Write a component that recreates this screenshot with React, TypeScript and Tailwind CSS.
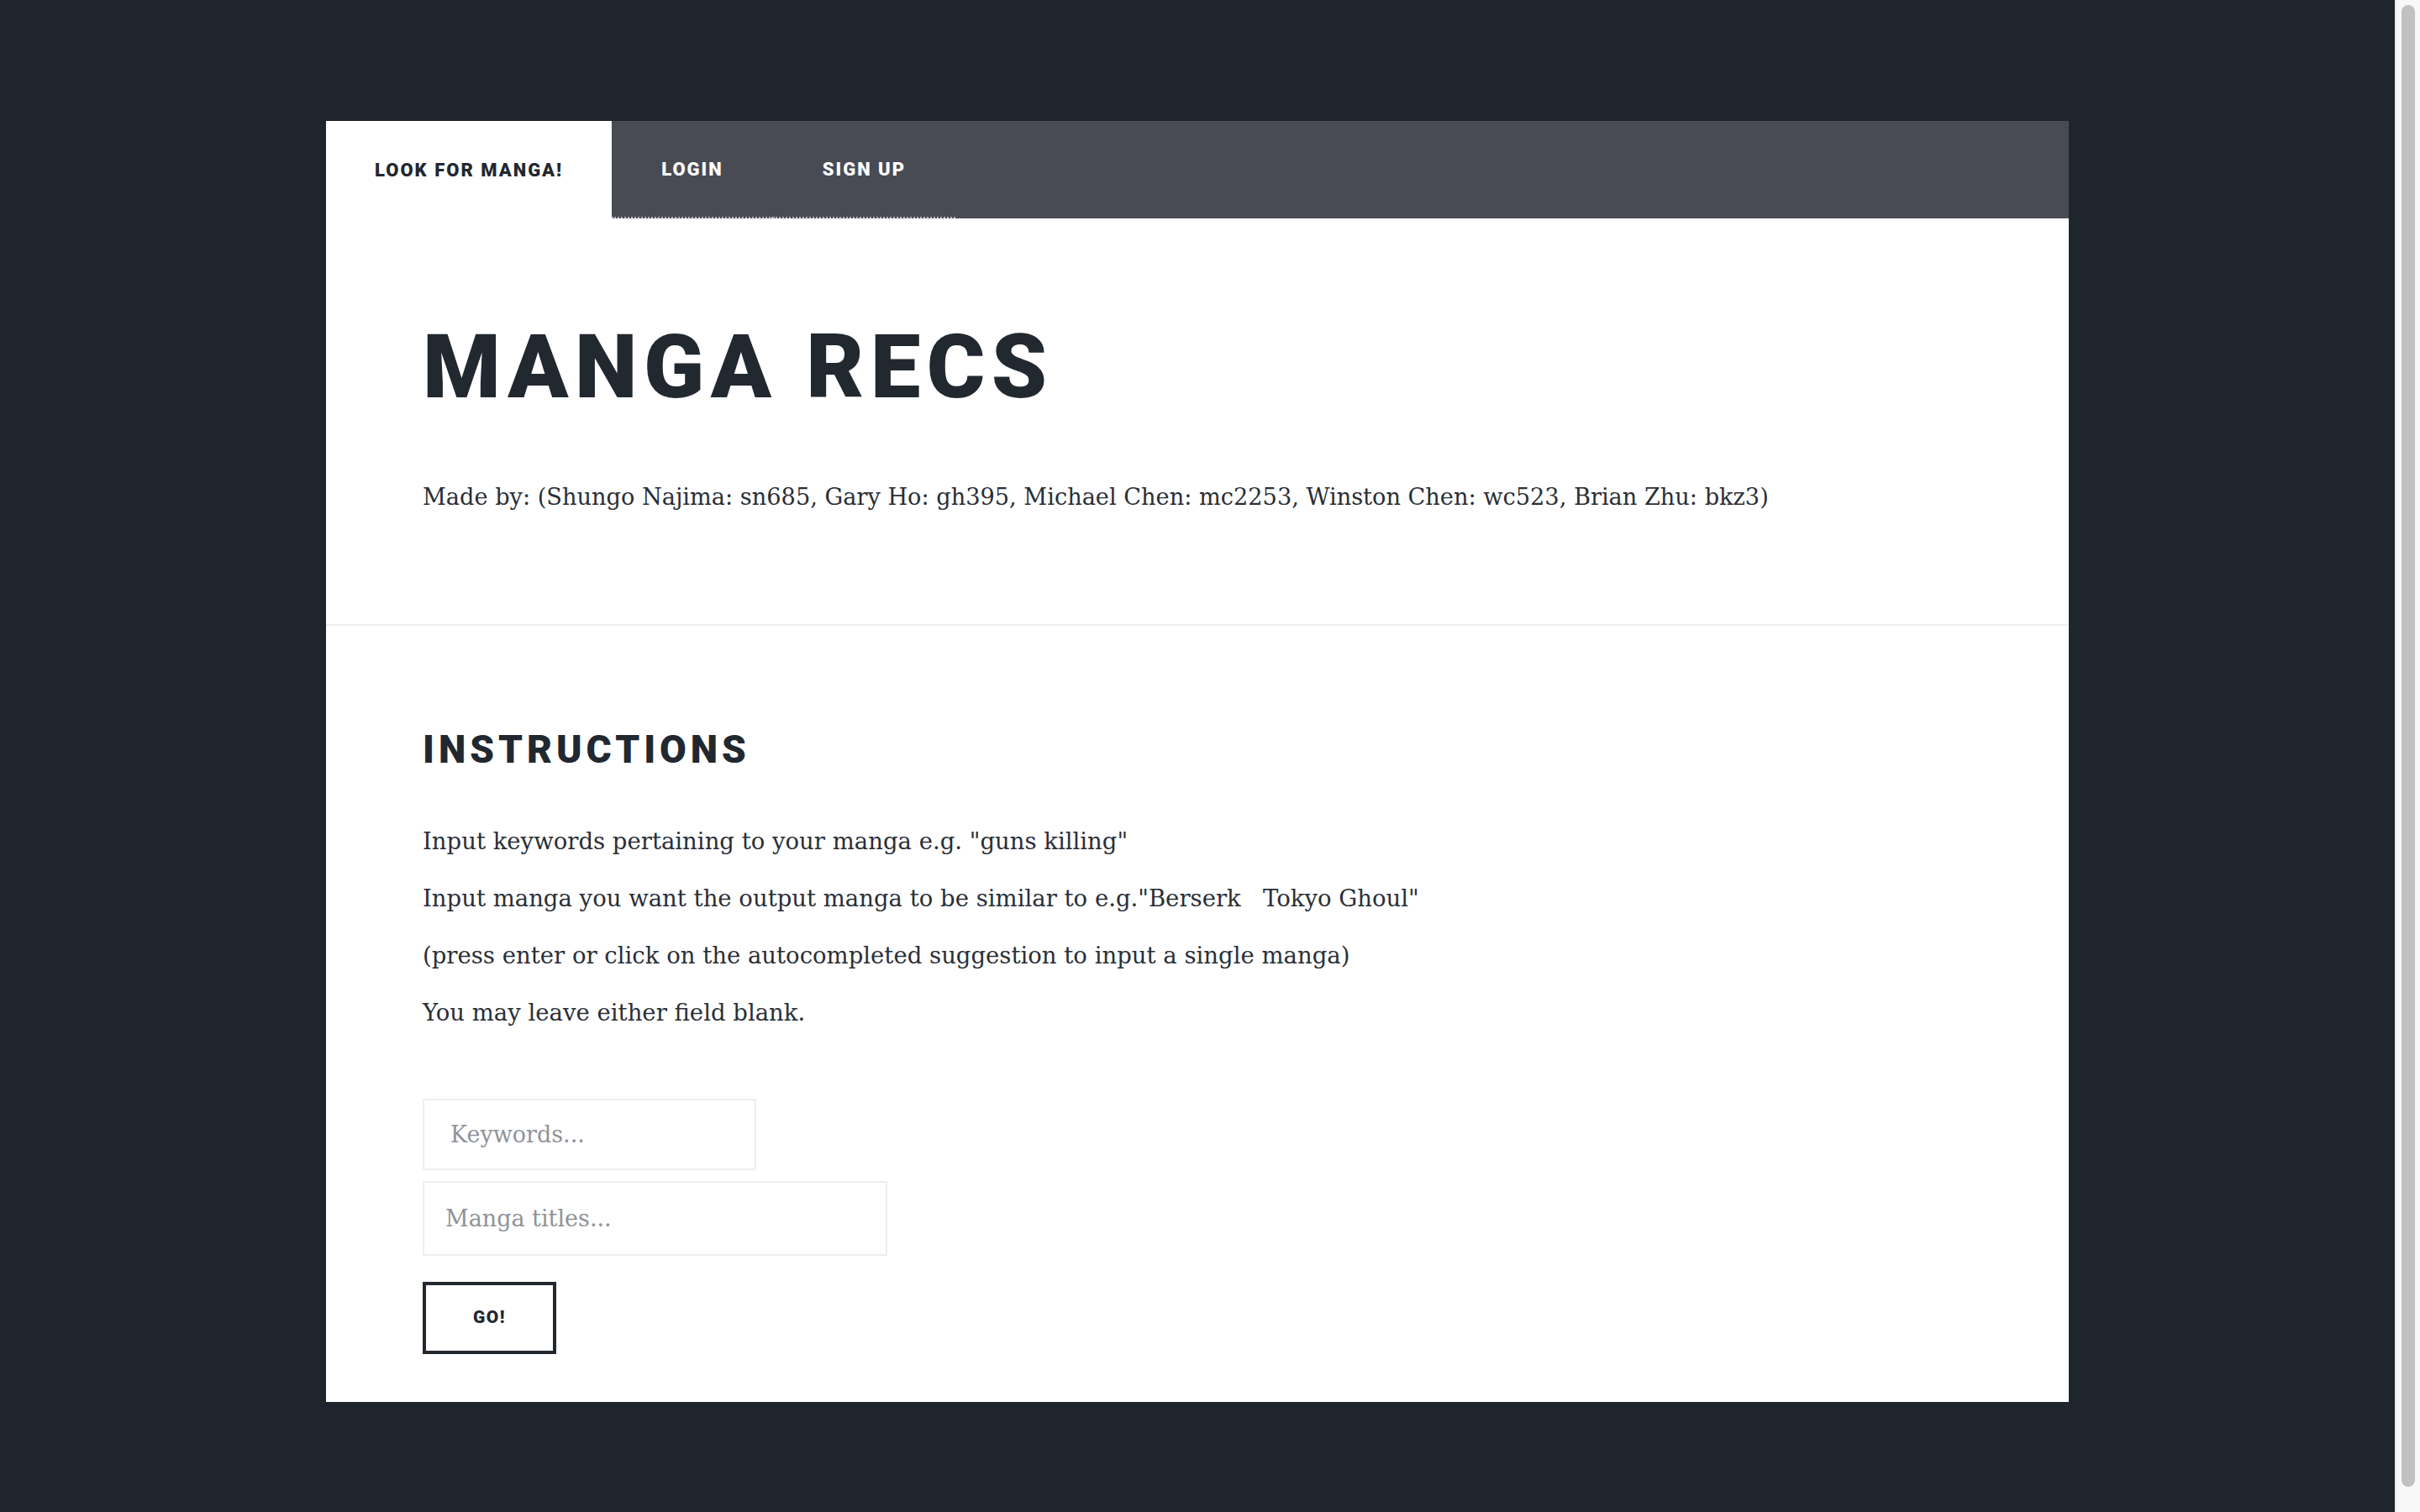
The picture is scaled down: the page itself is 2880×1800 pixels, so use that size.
import React from 'react';

const heading = "font-['Roboto',sans-serif] font-black uppercase text-[#22282f]";
const serif = "font-['DejaVu_Serif',serif] text-[#2a2f37]";

function Tab({ label, active }: { label: string; active?: boolean }) {
    if (active) {
        return (
            <a className={`flex items-center px-[58px] bg-white ${heading} text-[22px] tracking-[2px]`}>
                {label}
            </a>
        );
    }
    return (
        <a className="flex items-center px-[59px] border-b-2 border-dotted border-[#b0b1b5] font-['Roboto',sans-serif] font-black uppercase text-white text-[22px] tracking-[2px]">
            {label}
        </a>
    );
}

export default function App() {
    return (
        <div className="h-screen flex bg-[#1f252d] overflow-hidden">

            <main className="flex-1 pt-[144px] pb-[154px]">
                <div className="w-[2074px] mx-auto bg-white">

                    {/* nav */}
                    <nav className="h-[116px] bg-[#484b53] flex">
                        <Tab label="Look for manga!" active />
                        <Tab label="Login" />
                        <Tab label="Sign up" />
                    </nav>

                    {/* header */}
                    <header className="px-[115px] pt-[124px] pb-[129px] border-b-2 border-[#eeeeee]">
                        <h1 className={`${heading} text-[106px] leading-none tracking-[7.5px]`}>Manga Recs</h1>
                        <p className={`${serif} mt-[80px] text-[27.2px] leading-[44px]`}>
                            Made by: (Shungo Najima: sn685, Gary Ho: gh395, Michael Chen: mc2253, Winston Chen: wc523, Brian Zhu: bkz3)
                        </p>
                    </header>

                    {/* instructions + form */}
                    <section className="px-[115px] pt-[124px] pb-[57px]">
                        <h2 className={`${heading} text-[46px] leading-none tracking-[5px]`}>Instructions</h2>
                        <div className={`${serif} mt-[52px] text-[27.5px] leading-[68px]`}>
                            <p>Input keywords pertaining to your manga e.g. "guns killing"</p>
                            <p>Input manga you want the output manga to be similar to e.g."Berserk&nbsp;&nbsp;&nbsp;Tokyo Ghoul"</p>
                            <p>(press enter or click on the autocompleted suggestion to input a single manga)</p>
                            <p>You may leave either field blank.</p>
                        </div>

                        <div className="mt-[69px] flex flex-col items-start">
                            <input
                                type="text"
                                placeholder="Keywords..."
                                className="w-[397px] h-[85px] border-2 border-[#eeeeee] pl-[31px] font-['DejaVu_Serif',serif] text-[27px] text-[#2a2f37] placeholder:text-[#909399] outline-none"
                            />
                            <input
                                type="text"
                                placeholder="Manga titles..."
                                className="mt-[13px] w-[553px] h-[89px] border-2 border-[#eeeeee] pl-[25px] font-['DejaVu_Serif',serif] text-[27px] text-[#2a2f37] placeholder:text-[#909399] outline-none"
                            />
                            <button className="mt-[31px] w-[159px] h-[86px] border-4 border-[#23282f] bg-white font-['Roboto',sans-serif] font-black text-[21px] tracking-[1.5px] text-[#22282f]">
                                GO!
                            </button>
                        </div>
                    </section>

                </div>
            </main>

            {/* page scrollbar */}
            <div className="w-[30px] shrink-0 bg-[#f8f8f8] border-l-2 border-[#ececec] pt-[6px] pl-[6px]">
                <div className="w-[16px] h-[1764px] rounded-full bg-[#c1c1c1]" />
            </div>

        </div>
    );
}
